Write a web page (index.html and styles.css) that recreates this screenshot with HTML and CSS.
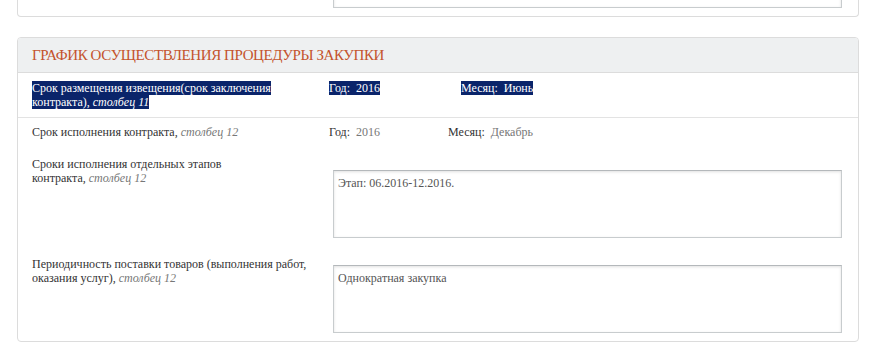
FILE: index.html
```html
<!DOCTYPE html>
<html lang="ru">
<head>
<meta charset="utf-8">
<title>График осуществления процедуры закупки</title>
<link rel="stylesheet" href="styles.css">
</head>
<body>
<div class="page">
  <div class="card card-top">
    <div class="row row-top">
      <div class="label"></div>
      <div class="value"><div class="area area-top"></div></div>
    </div>
  </div>

  <div class="card card-main">
    <div class="card-head">ГРАФИК ОСУЩЕСТВЛЕНИЯ ПРОЦЕДУРЫ ЗАКУПКИ</div>

    <div class="row row-1">
      <div class="label"><span class="sel">Срок размещения извещения(срок заключения контракта), <i>столбец 11</i></span></div>
      <div class="value inline">
        <span class="cell cell-year-1"><span class="sel">Год:&nbsp; 2016</span></span>
        <span class="cell"><span class="sel">Месяц:&nbsp; Июнь</span></span>
      </div>
    </div>

    <div class="row row-2">
      <div class="label">Срок исполнения контракта, <i class="col">столбец 12</i></div>
      <div class="value inline">
        <span class="cell cell-year-2">Год:&nbsp; <span class="muted">2016</span></span>
        <span class="cell">Месяц:&nbsp; <span class="muted">Декабрь</span></span>
      </div>
    </div>

    <div class="row row-3">
      <div class="label label-narrow">Сроки исполнения отдельных этапов контракта, <i class="col">столбец 12</i></div>
      <div class="value"><div class="area area-3">Этап: 06.2016-12.2016.</div></div>
    </div>

    <div class="row row-4">
      <div class="label">Периодичность поставки товаров (выполнения работ, оказания услуг), <i class="col">столбец 12</i></div>
      <div class="value"><div class="area area-4">Однократная закупка</div></div>
    </div>
  </div>
</div>
</body>
</html>
```

FILE: styles.css
```css
html, body {
  margin: 0;
  padding: 0;
  background: #ffffff;
}

body {
  font-family: "Liberation Serif", "Times New Roman", serif;
  font-size: 12px;
  line-height: 14px;
  color: #333333;
  overflow: hidden;
}

.page {
  padding-left: 17px;
  width: 842px;
}

.card {
  border: 1px solid #dcdcdc;
  border-radius: 4px;
  background: #ffffff;
}

.card-top {
  margin-top: -60px;
  border-top: none;
}

.row-top {
  padding: 0 16px 8px 14px;
}

.area-top {
  height: 66px;
}

.card-main {
  margin-top: 20px;
  overflow: hidden;
}

.card-head {
  background: #eef0f1;
  border-bottom: 1px solid #dcdcdc;
  height: 34px;
  line-height: 35px;
  padding-left: 14px;
  color: #c4532c;
  font-size: 15px;
  letter-spacing: -0.4px;
}

.row {
  display: flex;
  padding-left: 14px;
  padding-right: 16px;
}

.label {
  width: 292px;
  flex: none;
}

.label-narrow {
  width: 215px;
  margin-right: 77px;
}

.value {
  flex: 1;
  padding-left: 9px;
}

.value.inline {
  padding-left: 0;
  display: flex;
}

.row-1 {
  padding-top: 8px;
  padding-bottom: 8px;
  border-bottom: 1px solid #e3e3e3;
}

.row-1 .label {
  width: 252px;
  margin-right: 45px;
}

.row-2 {
  padding-top: 7px;
}

.row-2 .label {
  width: 292px;
  margin-right: 5px;
}

.row-3 {
  padding-top: 18px;
}

.row-4 {
  padding-top: 19px;
  padding-bottom: 8px;
}

.row-3 .area {
  margin-top: 13px;
}

.row-4 .area {
  margin-top: 8px;
}

.cell-year-1 {
  width: 132px;
}

.cell-year-2 {
  width: 119px;
}

.sel {
  background: #0a246a;
  color: #ffffff;
}

.sel i {
  color: #ffffff;
}

i.col {
  color: #777777;
}

.muted {
  color: #777777;
}

.area {
  height: 61px;
  border: 1px solid #c8ccce;
  border-top-color: #b4b8bb;
  box-shadow: inset 0 1px 3px rgba(0, 0, 0, 0.12);
  padding: 5px 4px 0 4px;
  color: #555555;
  background: #ffffff;
}
```
